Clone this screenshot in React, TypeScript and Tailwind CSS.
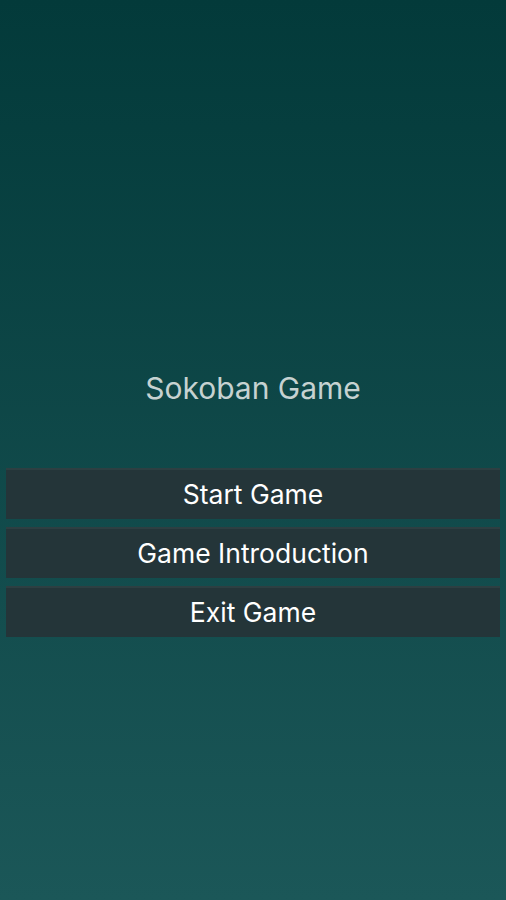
import React from "react";

export default function App() {
  const items = ["Start Game", "Game Introduction", "Exit Game"];
  return (
    <div className="h-[900px] w-full bg-gradient-to-b from-[#033a3a] to-[#1b5758] font-['Inter',sans-serif] flex flex-col">
      <div className="pt-[367px] h-[468px] flex justify-center">
        <h1 className="text-[30px] leading-[42px] text-[#c6d2d1] font-normal">Sokoban Game</h1>
      </div>
      <div className="flex flex-col gap-[8px] px-[6px]">
        {items.map((t) => (
          <button
            key={t}
            className="h-[51px] w-full bg-[#243539] border-t-2 border-[#2d3f42] text-white text-[26.5px] flex items-center justify-center"
          >
            {t}
          </button>
        ))}
      </div>
    </div>
  );
}
